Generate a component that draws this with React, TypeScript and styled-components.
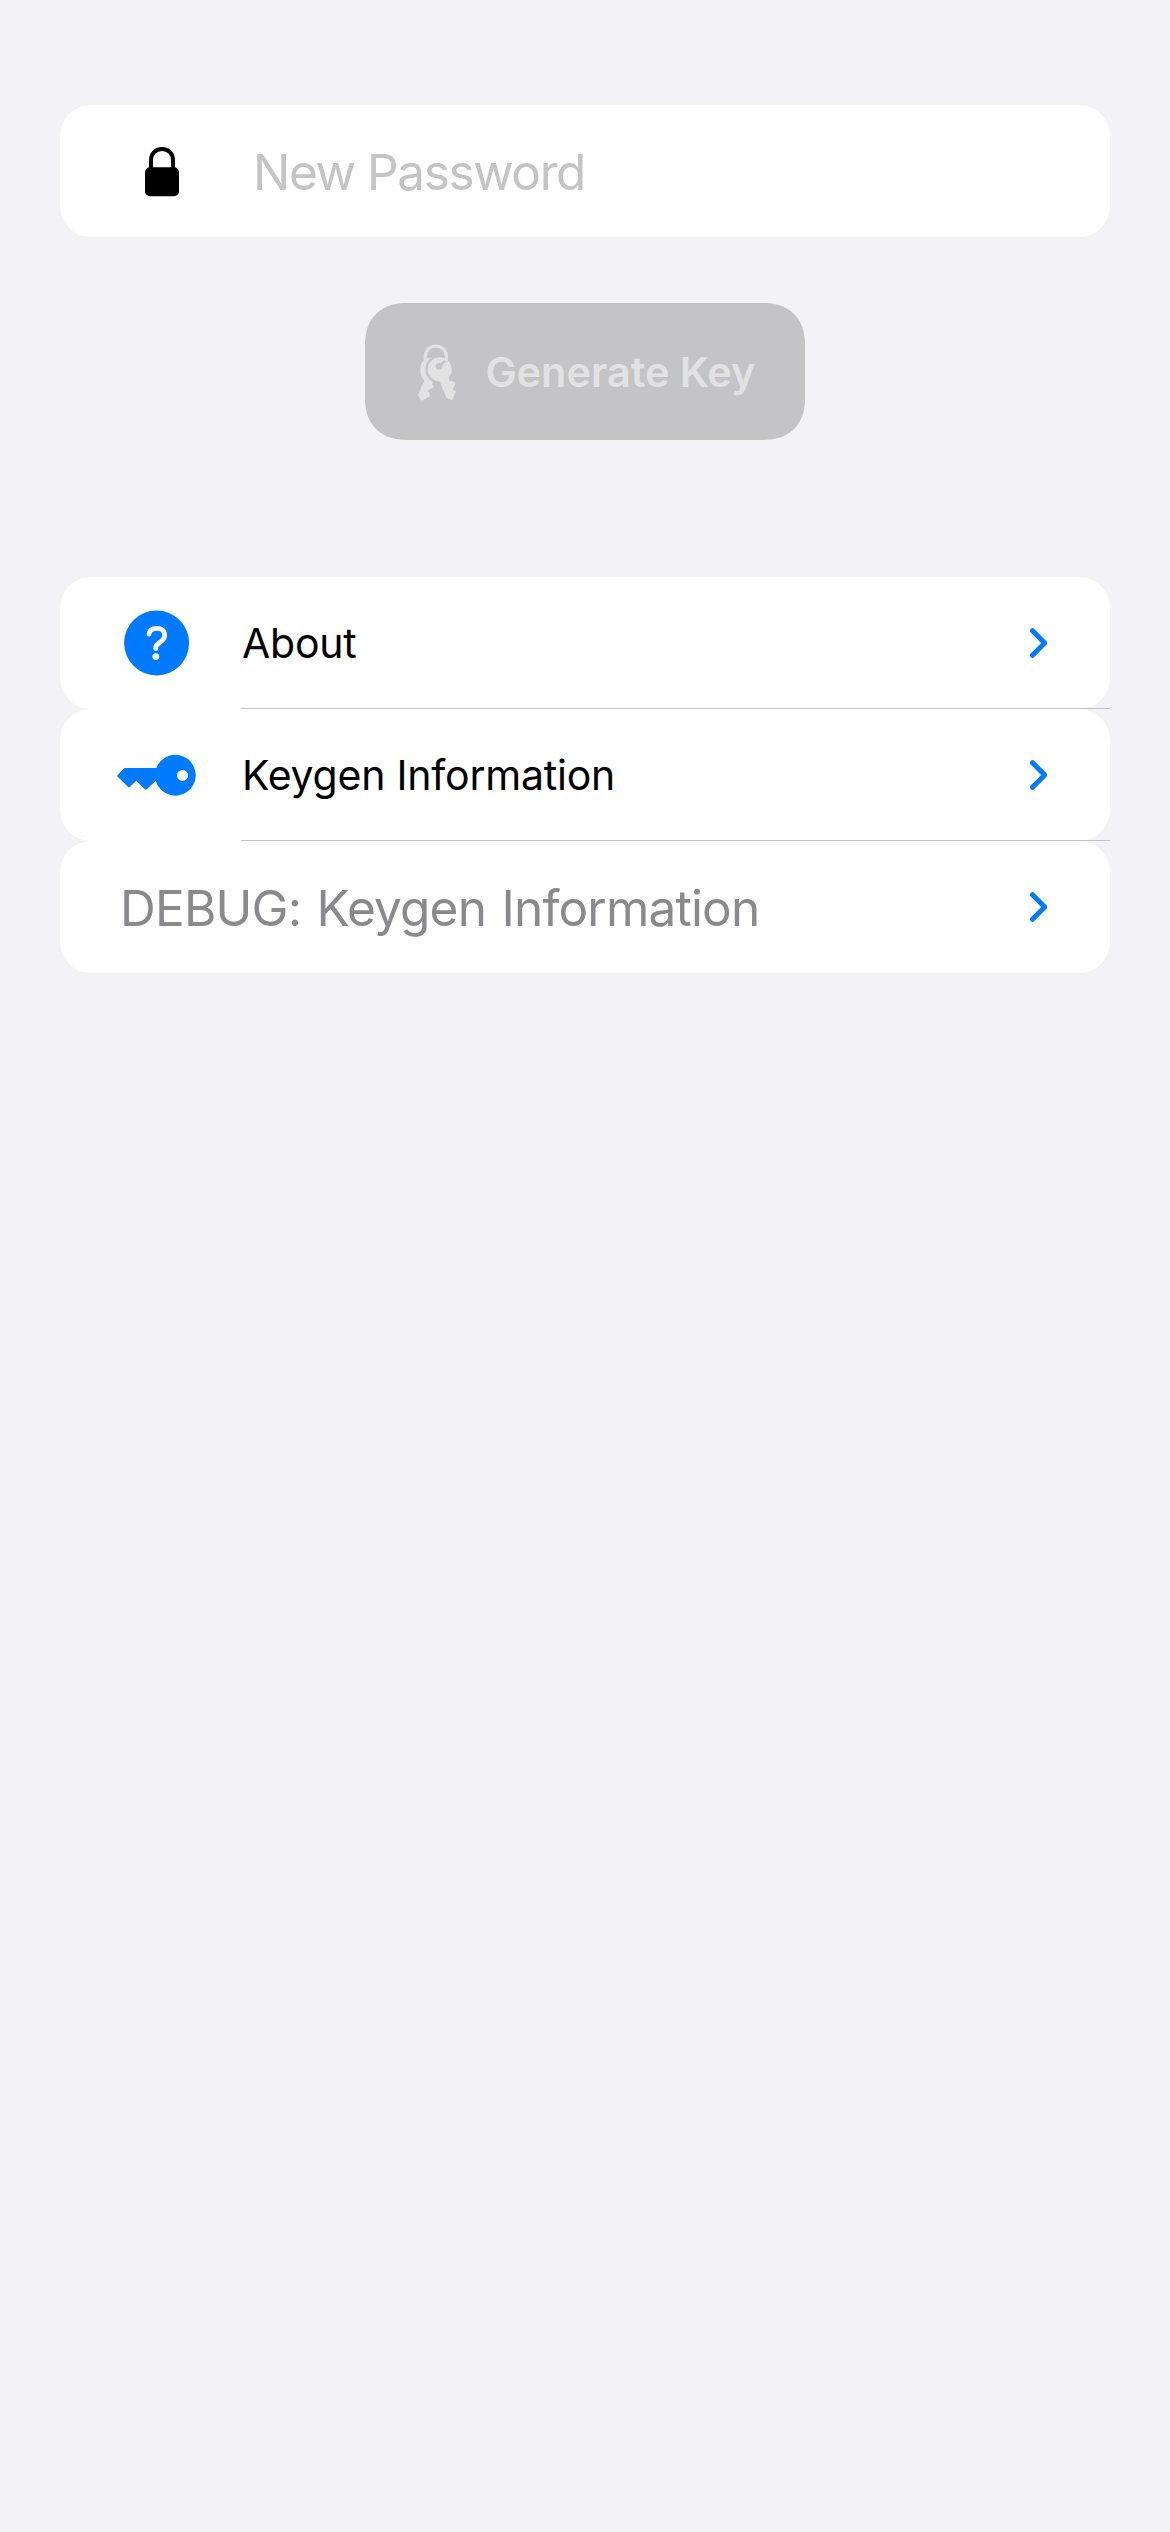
import React from "react";
import styled, { createGlobalStyle } from "styled-components";

const GlobalStyle = createGlobalStyle`
  * { box-sizing: border-box; }
  body {
    margin: 0;
    background: #f2f2f7;
    font-family: Inter, "Liberation Sans", sans-serif;
  }
`;

const Screen = styled.main`
  width: 1170px;
  min-height: 2532px;
  padding: 105px 60px 0;
  display: flex;
  flex-direction: column;
  background: #f2f2f7;
`;

const Card = styled.div`
  height: 132px;
  display: flex;
  align-items: center;
  background: #fff;
  border-radius: 34px;
  corner-shape: superellipse(1.15);
`;

const PasswordField = styled(Card)`
  padding: 1px 0 0 85px;
  gap: 74px;
`;

const PasswordInput = styled.input`
  width: 700px;
  height: 80px;
  padding: 0;
  border: 0;
  outline: 0;
  background: transparent;
  font-family: inherit;
  font-size: 49.5px;
  letter-spacing: -1.4px;
  &::placeholder {
    color: #c4c4c6;
    opacity: 1;
  }
`;

const GenerateButton = styled.button`
  align-self: center;
  width: 440px;
  height: 137px;
  margin: 66px 0 137px;
  padding: 0 0 0 35px;
  display: flex;
  align-items: center;
  border: 0;
  border-radius: 42px;
  corner-shape: superellipse(1.2);
  background: #c4c4c6;
  color: #e2e2e3;
  font-family: inherit;
  font-size: 41.5px;
  font-weight: 600;
  letter-spacing: -0.04px;
  white-space: nowrap;
`;

const ButtonLabel = styled.span`
  margin-left: 15.5px;
`;

const List = styled.nav`
  display: flex;
  flex-direction: column;
`;

const Row = styled(Card)<{ $divided?: boolean }>`
  position: relative;
  padding: 0 63px 0 0;
  &::after {
    content: "";
    display: ${(p) => (p.$divided ? "block" : "none")};
    position: absolute;
    left: 181px;
    right: 0;
    bottom: 0;
    height: 1px;
    background: #c3c3c6;
  }
`;

const IconSlot = styled.span`
  width: 182px;
  padding-left: 56px;
  display: flex;
  align-items: center;
`;

const RowLabel = styled.span`
  flex: 1;
  color: #000;
  font-size: 41px;
  letter-spacing: -0.22px;
`;

const DebugLabel = styled.span`
  flex: 1;
  padding: 1px 0 0 60px;
  color: #8a8a8e;
  font-size: 49.5px;
  letter-spacing: -0.8px;
  word-spacing: 2.2px;
`;

const Glyph = styled.svg`
  display: block;
  flex: none;
`;

const LockIcon = () => (
  <Glyph width="34" height="50" viewBox="0 0 34 50">
    <path d="M6 22V13.5C6 6.500 10.500 2 17 2S28 6.500 28 13.500V22" fill="none" stroke="#000" strokeWidth="4" />
    <rect y="20.300" width="34" height="29" rx="5" />
  </Glyph>
);

const KeysIcon = () => (
  <Glyph width="70" height="80" viewBox="0 4 210 240" fill="#e2e2e3">
    <defs>
      <mask id="behind" maskUnits="userSpaceOnUse" x="0" y="0" width="210" height="240">
        <rect width="210" height="240" fill="#fff" />
        <circle cx="119" cy="116" r="43" fill="#000" />
        <path d="M108 150L136 220H170V150Z" fill="#000" />
      </mask>
      <mask id="hole" maskUnits="userSpaceOnUse" x="0" y="0" width="210" height="240">
        <rect width="210" height="240" fill="#fff" />
        <circle cx="117" cy="107" r="10" fill="#000" />
        <path d="M119 107L139 87" stroke="#000" strokeWidth="8" />
      </mask>
    </defs>
    <path d="M77 90Q75.500 84 75.500 78A32 32 0 0 1 139.500 78Q139.500 84 138 91" fill="none" stroke="#e2e2e3" strokeWidth="9.500" />
    <g mask="url(#behind)">
      <path d="M83 82C103 78 120 90 120 116L100 153L96 160L102 168L82 181L89 187L90 197L64 210L54 194L73 149C64 141 61 130 61 116C61 101 69 86 83 82Z" />
    </g>
    <g mask="url(#hole)">
      <path d="M119 80A36 36 0 0 1 145 141L149 151L158 152L167 158L158 175L167 183L156 209L139 201L119 152A36 36 0 0 1 119 80Z" />
    </g>
  </Glyph>
);

const QuestionIcon = () => (
  <Glyph width="82" height="66" viewBox="0 0 82 66">
    <circle cx="40.600" cy="33" r="32.500" fill="#007aff" />
    <path d="M33 24C33.500 20.200 36.200 18.300 40.700 18.300C45.600 18.300 48.600 20.900 48.600 25C48.600 28.600 47 30.400 43.800 32.400C40.900 34.200 39.800 35.400 39.800 37.600V38.700" fill="none" stroke="#fff" strokeWidth="4.800" strokeLinecap="round" strokeLinejoin="round" />
    <circle cx="39.800" cy="46.600" r="3.400" fill="#fff" />
  </Glyph>
);

const KeyIcon = () => (
  <Glyph width="82" height="42" viewBox="0 -0.700 82 42">
    <path fill="#007aff" fillRule="evenodd" d="M1.700 20.300L7.500 14Q8.200 13.300 9.200 13.300H40.300A20.400 20.400 0 1 1 39.700 26L30.800 34.500Q29.800 35.300 28.800 34.500L20.300 26L14 32Q13 33 12 32L1.700 22Q.8 21.200 1.700 20.300ZM61 20.700A5.500 5.500 0 1 0 72 20.700A5.500 5.500 0 1 0 61 20.700Z" />
  </Glyph>
);

const Chevron = () => (
  <Glyph width="17" height="30" viewBox="0 0 17 30">
    <path d="M2.500 2.700L14.700 15L2.500 27.300" fill="none" stroke="#007aff" strokeWidth="5" strokeLinecap="round" strokeLinejoin="round" />
  </Glyph>
);

export default function App() {
  return (
    <>
      <GlobalStyle />
      <Screen>
        <PasswordField>
          <LockIcon />
          <PasswordInput type="password" placeholder="New Password" />
        </PasswordField>
        <GenerateButton disabled>
          <KeysIcon />
          <ButtonLabel>Generate Key</ButtonLabel>
        </GenerateButton>
        <List>
          <Row $divided>
            <IconSlot><QuestionIcon /></IconSlot>
            <RowLabel>About</RowLabel>
            <Chevron />
          </Row>
          <Row $divided>
            <IconSlot><KeyIcon /></IconSlot>
            <RowLabel>Keygen Information</RowLabel>
            <Chevron />
          </Row>
          <Row>
            <DebugLabel>DEBUG: Keygen Information</DebugLabel>
            <Chevron />
          </Row>
        </List>
      </Screen>
    </>
  );
}
